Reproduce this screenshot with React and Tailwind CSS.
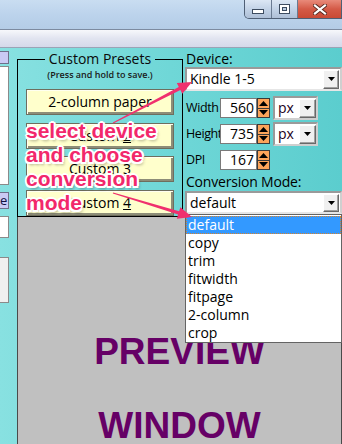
import React from "react";

function DropBtn({ w = "w-[16px]", h = "h-[19px]" }) {
  return (
    <div className={`${w} ${h} shrink-0 bg-[#f0f0f0] border border-t-white border-l-white border-r-[#696969] border-b-[#696969] shadow-[inset_-1px_-1px_0_#a0a0a0] flex items-center justify-center`}>
      <svg width="7" height="4" viewBox="0 0 7 4"><path d="M0 0H7L3.5 4Z" fill="#000" /></svg>
    </div>
  );
}

function Spinner() {
  return (
    <div className="w-[13px] h-[20px] shrink-0 bg-[#fca45a] border border-[#3a3a3a] flex flex-col">
      <div className="flex-1 flex items-center justify-center border-b border-[#3a3a3a]">
        <svg width="9" height="5" viewBox="0 0 9 5"><path d="M0 5H9L4.5 0Z" fill="#000" /></svg>
      </div>
      <div className="flex-1 flex items-center justify-center">
        <svg width="9" height="5" viewBox="0 0 9 5"><path d="M0 0H9L4.5 5Z" fill="#000" /></svg>
      </div>
    </div>
  );
}

function NumRow({ label, value, unit }) {
  return (
    <div className="h-[24px] flex items-center">
      <div className="w-[35px] shrink-0 pl-[1px] text-[12.5px] tracking-[-0.4px] leading-[16px] whitespace-nowrap">{label}</div>
      <div className="relative w-[37px] h-[20px] shrink-0 bg-white border border-[#7a7a7a] text-right pr-[2px] text-[14px] leading-[18px]">{value}</div>
      <Spinner />
      {unit && (
        <div className="ml-[3px] w-[45px] h-[24px] bg-white border-2 border-t-[#9a9a9a] border-l-[#9a9a9a] border-r-[#cfcfcf] border-b-[#cfcfcf] flex items-center">
          <div className="flex-1 pl-[3px] text-[14px] leading-[16px] text-[#220022]">{unit}</div>
          <DropBtn w="w-[17px]" h="h-[19px]" />
        </div>
      )}
    </div>
  );
}

function PresetBtn({ children, className = "" }) {
  return (
    <div className={`h-[26px] mx-[8px] bg-[#ffffcc] border border-[#6e6e5e] shadow-[inset_1px_1px_0_#fffff0,inset_-2px_-2px_0_#8d8d78] flex items-center justify-center text-[14px] leading-[16px] ${className}`}>
      <span>{children}</span>
    </div>
  );
}

export default function App() {
  const items = ["default", "copy", "trim", "fitwidth", "fitpage", "2-column", "crop"];
  return (
    <div className="relative w-[342px] h-[444px] overflow-hidden font-['Open_Sans',sans-serif] text-black">
      {/* title bar */}
      <div className="h-[30px] bg-gradient-to-b from-[#c9ddf1] via-[#bcd3ec] to-[#b4cce6] border-b border-[#7d8ba0] flex justify-end items-start">
        <div className="flex h-[19px] border border-t-0 border-[#4f5f75] rounded-bl-[5px] overflow-hidden">
          <div className="w-[27px] h-full bg-gradient-to-b from-[#dce7f4] via-[#c3d3e7] to-[#aebfd6] border-r border-[#6a7b92] rounded-bl-[4px] flex items-center justify-center pt-[4px]">
            <div className="w-[12px] h-[5px] bg-white border border-[#3d4c60]" />
          </div>
          <div className="w-[26px] h-full bg-gradient-to-b from-[#dce7f4] via-[#c3d3e7] to-[#aebfd6] border-r border-[#6a7b92] flex items-center justify-center">
            <div className="w-[11px] h-[10px] border border-[#3d4c60] bg-white flex items-center justify-center">
              <div className="w-[5px] h-[4px] bg-[#b9cbe0] border border-[#3d4c60]" />
            </div>
          </div>
          <div className="w-[43px] h-full bg-gradient-to-b from-[#e88a7a] via-[#d45a47] to-[#c94a35] flex items-center justify-center">
            <svg width="14" height="11" viewBox="0 0 14 11">
              <path d="M2 1.5L12 9.5M12 1.5L2 9.5" stroke="#5a2a22" strokeWidth="4" strokeLinecap="square" />
              <path d="M2 1.5L12 9.5M12 1.5L2 9.5" stroke="#fff" strokeWidth="2.2" strokeLinecap="square" />
            </svg>
          </div>
        </div>
      </div>
      {/* toolbar band */}
      <div className="h-[18px] bg-gradient-to-b from-[#f7f8fb] via-[#e1e4f0] to-[#d5d9ea] border-b border-[#9ba3b6]" />

      {/* main */}
      <div className="flex h-[396px] bg-gradient-to-r from-[#88e1e1] via-[#6fd7d7] to-[#5bcdce]">
        {/* left strip */}
        <div className="w-[17px] shrink-0 flex flex-col">
          <div className="mt-[3px] w-[9px] h-[13px] bg-[#cacaf4] border border-l-0 border-[#6f6f8a]" />
          <div className="mt-[2px] w-[9px] h-[119px] bg-white border border-l-0 border-[#8a8a8a]" />
          <div className="mt-[7px] w-[9px] h-[17px] bg-[#cacaf4] border border-l-0 border-[#6f6f8a] text-[13px] leading-[15px] text-right pr-[1px] text-[#101040] overflow-hidden">e</div>
          <div className="mt-[7px] w-[9px] h-[22px] bg-white border border-l-0 border-[#8a8a8a]" />
          <div className="mt-[19px] w-[9px] h-[46px] bg-[#f0f0f0] border border-l-0 border-[#8a8a8a]" />
        </div>

        {/* content column */}
        <div className="flex-1 flex flex-col">
          <div className="h-[173px] flex">
            <fieldset className="mt-[2px] w-[166px] shrink-0 border border-black flex flex-col">
              <legend className="mx-auto px-[4px] text-[14px] leading-[18px] text-[#0a0a0a]">Custom Presets</legend>
              <div className="text-center text-[9px] leading-[12px] font-semibold text-[#1a1a1a] mt-[1px]">(Press and hold to save.)</div>
              <PresetBtn className="mt-[8px]">2-column paper</PresetBtn>
              <PresetBtn className="mt-[8px]">Custom <span className="underline">2</span></PresetBtn>
              <PresetBtn className="mt-[7px]">Custom <span className="underline">3</span></PresetBtn>
              <PresetBtn className="mt-[8px]">Custom <span className="underline">4</span></PresetBtn>
            </fieldset>

            <div className="flex-1 pl-[2px] flex flex-col">
              <div className="pt-[3px] h-[19px] pl-[1px] text-[14px] leading-[16px]">Device:</div>
              <div className="w-[157px] h-[24px] bg-white border-2 border-t-[#9a9a9a] border-l-[#9a9a9a] border-r-[#cfcfcf] border-b-[#e6e6e6] flex items-center">
                <div className="flex-1 pl-[3px] text-[14px] leading-[16px]">Kindle 1-5</div>
                <DropBtn />
                <div className="w-[1px]" />
              </div>
              <div className="mt-[5px]"><NumRow label="Width" value="560" unit="px" /></div>
              <div className="mt-[2px]"><NumRow label="Height" value="735" unit="px" /></div>
              <div className="mt-[2px]"><NumRow label="DPI" value="167" /></div>
              <div className="mt-[2px] h-[16px] pl-[1px] text-[14px] tracking-[-0.2px] leading-[16px] whitespace-nowrap">Conversion Mode:</div>
              <div className="mt-[1px] w-[157px] h-[23px] bg-white border-2 border-t-[#9a9a9a] border-l-[#9a9a9a] border-r-[#cfcfcf] border-b-[#e6e6e6] flex items-center">
                <div className="flex-1 pl-[3px] text-[14px] leading-[16px]">default</div>
                <DropBtn h="h-[18px]" />
                <div className="w-[1px]" />
              </div>
            </div>
          </div>

          {/* preview */}
          <div className="flex-1 bg-[#c0c0c0] border-l border-r border-[#4a4a4a] flex flex-col items-center pt-[116px] gap-[37px] font-['Liberation_Sans',Arial,sans-serif] font-bold text-[37px] leading-[37px] text-[#660066]">
            <div>PREVIEW</div>
            <div>WINDOW</div>
          </div>
        </div>
      </div>

      {/* dropdown list */}
      <div className="absolute left-[185px] top-[214px] w-[157px] h-[129px] bg-white border border-[#646464] py-[1px]">
        {items.map((it, i) => (
          <div
            key={it}
            className={
              i === 0
                ? "h-[18px] pl-[2px] bg-[#3399ff] text-white text-[14px] leading-[18px] outline outline-1 outline-dotted outline-[#d9822b] -outline-offset-1"
                : "h-[18px] pl-[2px] text-[14px] leading-[18px] text-black"
            }
          >
            {it}
          </div>
        ))}
      </div>

      {/* arrows */}
      <svg className="absolute inset-0 pointer-events-none" width="342" height="444" viewBox="0 0 342 444">
        <polygon points="113.2,123.4 180.4,90.0 182.3,93.8 192,82 176.8,83.1 178.8,86.9 112.8,122.6" fill="#f0306e" />
        <polygon points="112.85,193.48 178.09,214.6 176.86,218.67 192,217 180.34,207.19 179.11,211.26 113.15,192.52" fill="#f0306e" />
      </svg>

      {/* annotation */}
      <div
        className="absolute left-[26px] top-[119px] font-['Liberation_Sans',Arial,sans-serif] font-bold text-[21px] leading-[24px] text-[#f2286b] pointer-events-none [text-shadow:-1.5px_-1.5px_0_#fff,1.5px_-1.5px_0_#fff,-1.5px_1.5px_0_#fff,1.5px_1.5px_0_#fff,0_-2px_0_#fff,0_2px_0_#fff,-2px_0_0_#fff,2px_0_0_#fff,2px_3px_3px_rgba(0,0,0,0.35)]"
      >
        <div>select device</div>
        <div>and choose</div>
        <div>conversion</div>
        <div>mode</div>
      </div>
    </div>
  );
}
